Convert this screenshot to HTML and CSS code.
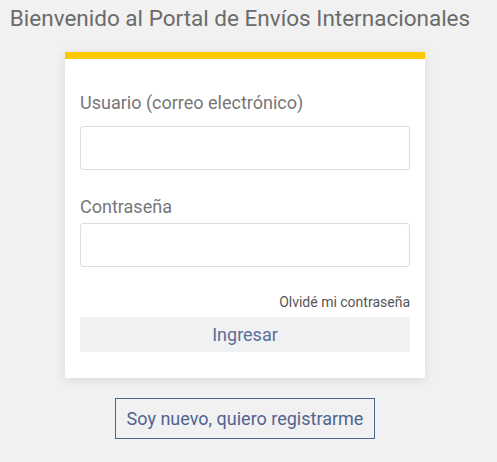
FILE: index.html
```html
<!DOCTYPE html>
<html lang="es">
<head>
<meta charset="utf-8">
<link rel="stylesheet" href="styles.css">
</head>
<body>
<main class="page">
  <h1 class="title">Bienvenido al Portal de Envíos Internacionales</h1>
  <form class="card">
    <label class="label label-first" for="user">Usuario (correo electrónico)</label>
    <input class="input" id="user" type="text">
    <label class="label label-second" for="pass">Contraseña</label>
    <input class="input" id="pass" type="password">
    <a class="forgot">Olvidé mi contraseña</a>
    <button class="submit" type="button">Ingresar</button>
  </form>
  <button class="register" type="button">Soy nuevo, quiero registrarme</button>
</main>
</body>
</html>
```
FILE: styles.css
```css
html, body {
  margin: 0;
  padding: 0;
  background: #f1f1f1;
  font-family: Roboto, "Liberation Sans", sans-serif;
}
.page {
  display: flex;
  flex-direction: column;
  align-items: center;
  padding: 5px 7px 0 0;
}
.title {
  margin: 0 10px 0 0;
  font-size: 22.5px;
  font-weight: 400;
  color: #6b6b6b;
  line-height: 27px;
  white-space: nowrap;
}
.card {
  margin-top: 20px;
  width: 360px;
  box-sizing: border-box;
  background: #fff;
  border-top: 7px solid #fcc900;
  box-shadow: 0 2px 10px rgba(0,0,0,0.10);
  padding: 33px 15px 26px;
  display: flex;
  flex-direction: column;
}
.label {
  font-size: 18px;
  color: #777;
  line-height: 21px;
}
.label-first {
  margin-bottom: 13px;
}
.label-second {
  margin-top: 26px;
  margin-bottom: 6px;
}
.input {
  height: 44px;
  box-sizing: border-box;
  border: 1px solid #ddd;
  border-radius: 3px;
  background: #fff;
  margin: 0;
}
.forgot {
  align-self: flex-end;
  margin-top: 27px;
  font-size: 14px;
  color: #555;
  line-height: 16px;
}
.submit {
  margin-top: 7px;
  height: 35px;
  border: none;
  background: #f0f1f3;
  color: #5a6e98;
  font-family: inherit;
  font-size: 18px;
}
.register {
  margin-top: 20px;
  height: 41px;
  padding: 0 11px;
  border: 1px solid #4f6390;
  background: #f1f1f1;
  color: #4f6390;
  font-family: inherit;
  font-size: 18px;
}
```
